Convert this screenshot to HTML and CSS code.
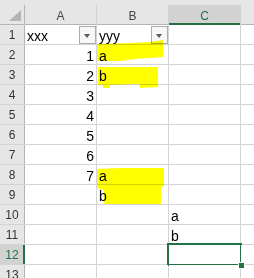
FILE: index.html
```html
<!DOCTYPE html>
<html>
<head>
<meta charset="utf-8">
<link rel="stylesheet" href="styles.css">
</head>
<body>
<div class="topstrip"></div>
<div class="sheet">
  <div class="corner"><svg width="24" height="19" viewBox="0 0 24 19"><polygon points="21,5 21,16 9,16" fill="#b4b4b4"/></svg></div>
  <div class="colhead">A</div>
  <div class="colhead">B</div>
  <div class="colhead sel">C</div>
  <div class="colhead"></div>

  <div class="rowhead">1</div>
  <div class="cell filter">xxx<span class="dd"></span></div>
  <div class="cell filter">yyy<span class="dd"></span></div>
  <div class="cell"></div><div class="cell"></div>

  <div class="rowhead">2</div>
  <div class="cell num">1</div><div class="cell">a</div><div class="cell"></div><div class="cell"></div>

  <div class="rowhead">3</div>
  <div class="cell num">2</div><div class="cell">b</div><div class="cell"></div><div class="cell"></div>

  <div class="rowhead">4</div>
  <div class="cell num">3</div><div class="cell"></div><div class="cell"></div><div class="cell"></div>

  <div class="rowhead">5</div>
  <div class="cell num">4</div><div class="cell"></div><div class="cell"></div><div class="cell"></div>

  <div class="rowhead">6</div>
  <div class="cell num">5</div><div class="cell"></div><div class="cell"></div><div class="cell"></div>

  <div class="rowhead">7</div>
  <div class="cell num">6</div><div class="cell"></div><div class="cell"></div><div class="cell"></div>

  <div class="rowhead">8</div>
  <div class="cell num">7</div><div class="cell">a</div><div class="cell"></div><div class="cell"></div>

  <div class="rowhead">9</div>
  <div class="cell"></div><div class="cell">b</div><div class="cell"></div><div class="cell"></div>

  <div class="rowhead">10</div>
  <div class="cell"></div><div class="cell"></div><div class="cell">a</div><div class="cell"></div>

  <div class="rowhead">11</div>
  <div class="cell"></div><div class="cell"></div><div class="cell">b</div><div class="cell"></div>

  <div class="rowhead sel">12</div>
  <div class="cell"></div><div class="cell"></div><div class="cell active"></div><div class="cell"></div>

  <div class="rowhead">13</div>
  <div class="cell"></div><div class="cell"></div><div class="cell"></div><div class="cell"></div>
</div>
<svg class="marker" width="254" height="278" viewBox="0 0 254 278">
  <polygon points="97,44 130,43 150,42 163,40 163,57 150,58 135,59 120,61 97,61"/>
  <polygon points="98,67 158,67 158,87 140,88 139,84 110,85 110,88 103,88 103,85 98,85"/>
  <polygon points="97,169 120,168 164,168 164,186 161,187 161,204 104,204 104,190 97,188"/>
</svg>
</body>
</html>
```

FILE: styles.css
```css
html, body {
  margin: 0;
  padding: 0;
}
body {
  width: 254px;
  height: 278px;
  overflow: hidden;
  background: #ffffff;
  position: relative;
  font-family: "Liberation Sans", Arial, sans-serif;
}
.topstrip {
  height: 5px;
  background: #e6e6e6;
}
.sheet {
  display: grid;
  grid-template-columns: 24px 71px 71px 71px 1fr;
  grid-auto-rows: 19px;
  gap: 1px;
  background: #d4d4d4;
}
.corner {
  background: #e6e6e6;
  box-shadow: 0 1px 0 #b4b4b4, 1px 0 0 #b4b4b4;
}
.corner svg {
  display: block;
}
.colhead {
  background: #e6e6e6;
  color: #444444;
  font-size: 12px;
  display: flex;
  align-items: center;
  justify-content: center;
  padding-top: 2px;
  box-shadow: 0 1px 0 #b4b4b4;
}
.colhead.sel {
  background: #d2d2d2;
  color: #217346;
  box-shadow: 0 1px 0 #217346, inset 0 -1px 0 #217346;
}
.rowhead {
  background: #e6e6e6;
  color: #333333;
  font-size: 12px;
  display: flex;
  align-items: center;
  justify-content: center;
  padding-top: 1px;
  box-shadow: 1px 0 0 #b4b4b4;
}
.rowhead.sel {
  background: #d2d2d2;
  color: #217346;
  box-shadow: 1px 0 0 #217346, inset -1px 0 0 #217346;
}
.cell {
  background: #ffffff;
  color: #000000;
  font-size: 14px;
  line-height: 16px;
  display: flex;
  align-items: flex-end;
  padding: 0 2px;
  position: relative;
}
.cell.num {
  justify-content: flex-end;
}
.dd {
  position: absolute;
  right: 0;
  top: 1px;
  width: 15px;
  height: 16px;
  border: 1px solid #ababab;
  background: #f7f7f7;
}
.dd::after {
  content: "";
  position: absolute;
  left: 4px;
  top: 7px;
  border-left: 3.5px solid transparent;
  border-right: 3.5px solid transparent;
  border-top: 4px solid #595959;
}
.cell.active::after {
  content: "";
  position: absolute;
  left: -2px;
  top: -2px;
  right: -2px;
  bottom: -2px;
  border: 2px solid #217346;
}
.cell.active::before {
  content: "";
  position: absolute;
  right: -5px;
  bottom: -5px;
  width: 5px;
  height: 5px;
  background: #217346;
  border: 1px solid #ffffff;
  z-index: 2;
}
.marker {
  position: absolute;
  left: 0;
  top: 0;
  pointer-events: none;
  mix-blend-mode: multiply;
  fill: #ffff00;
}
```
